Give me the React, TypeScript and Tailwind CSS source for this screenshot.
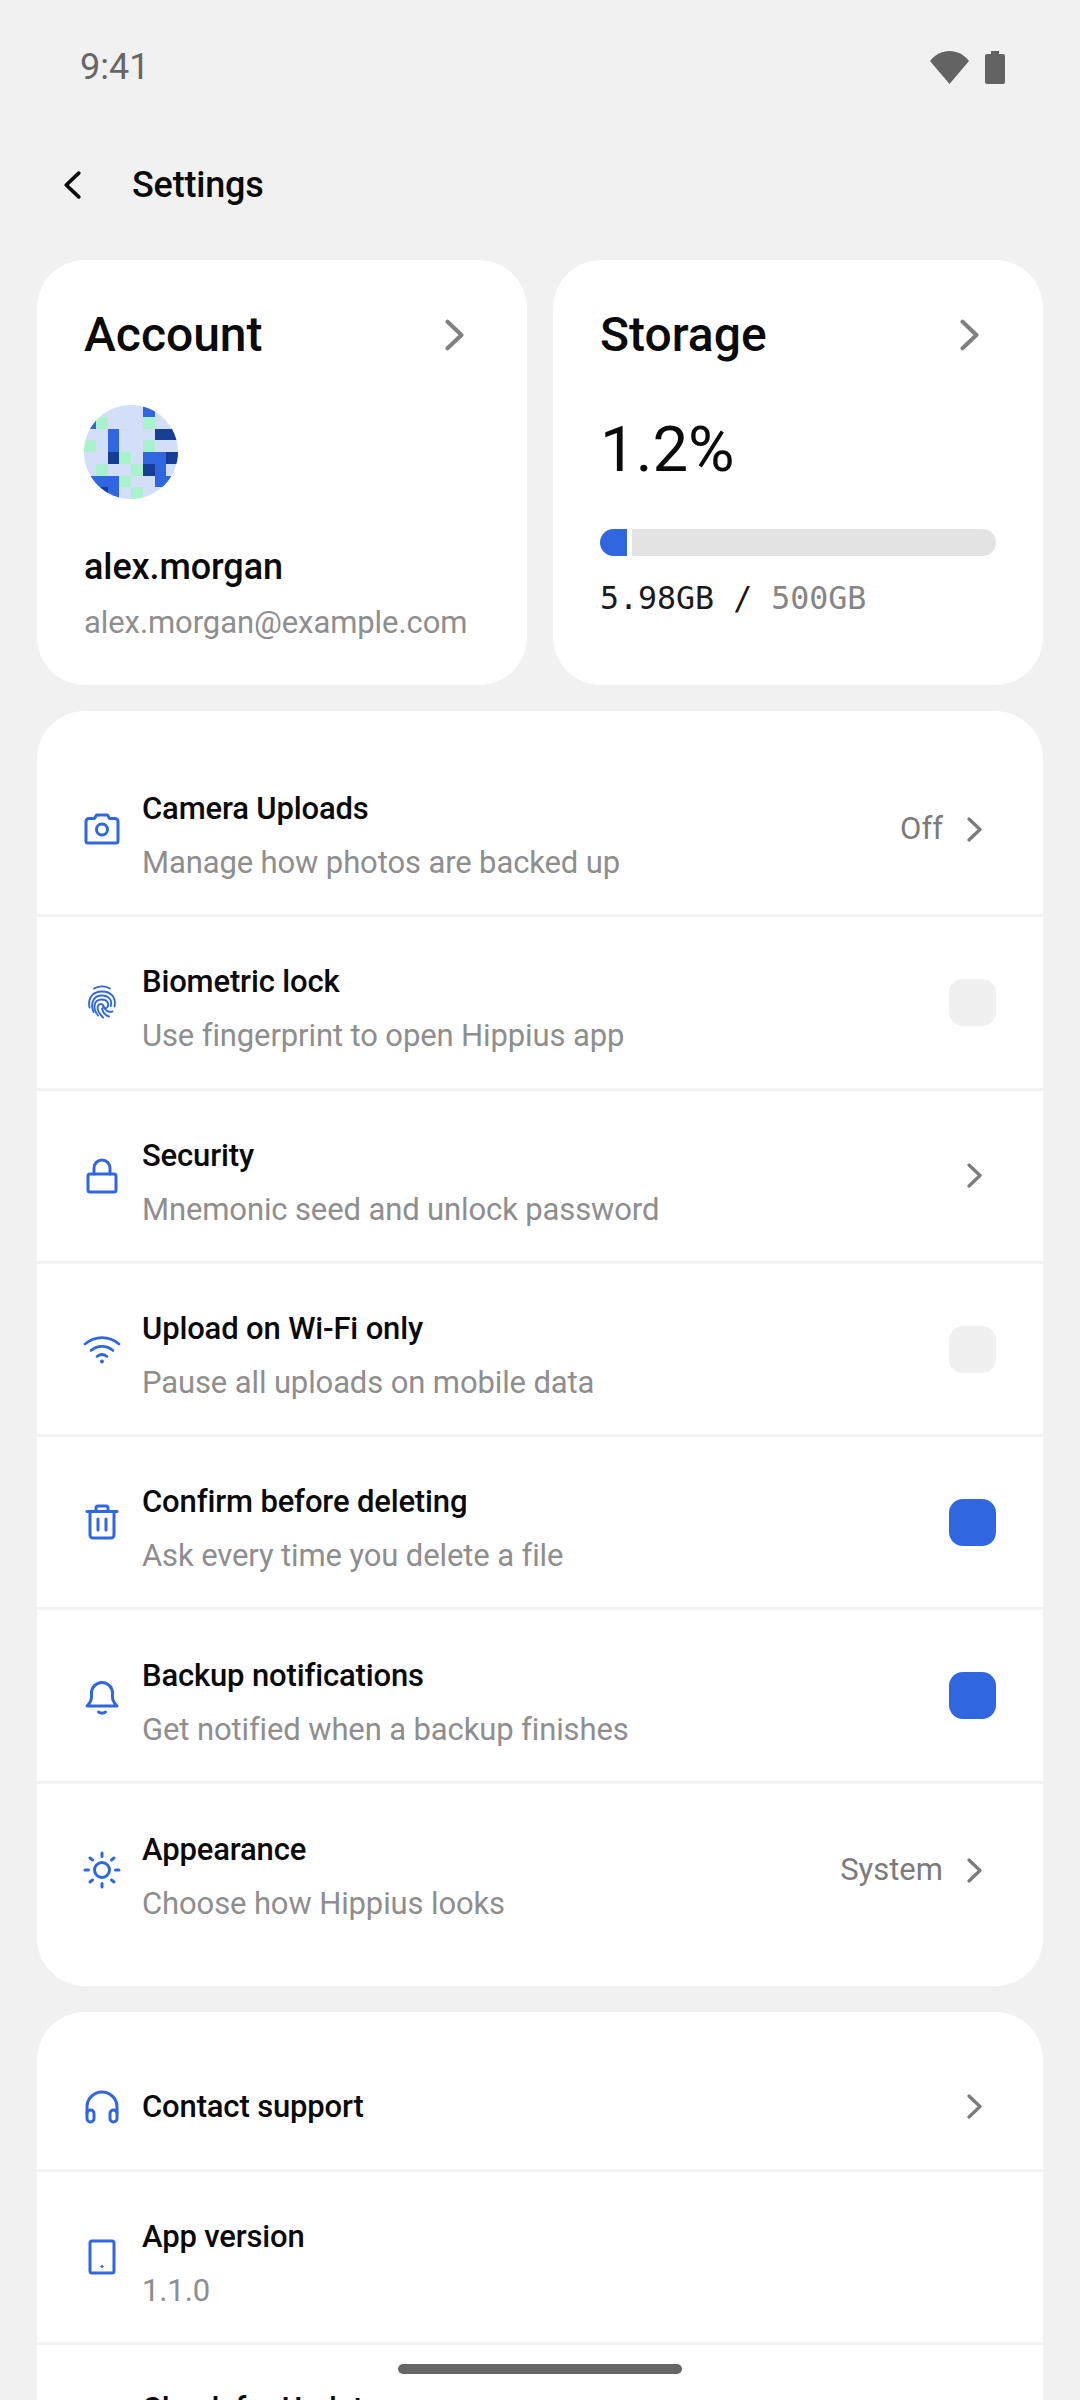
import type { ReactNode } from "react";

const BLUE = "#3067e0";

function Chevron({ className = "w-[15px] h-[25px] text-[#7b7b7b]" }: { className?: string }) {
  return (
    <svg viewBox="0 0 15 25" className={className} fill="none" stroke="currentColor" strokeWidth="3.2" strokeLinecap="round" strokeLinejoin="round">
      <path d="M2 2l11 10.5L2 23" />
    </svg>
  );
}

function Icon({ children }: { children: ReactNode }) {
  return (
    <svg viewBox="0 0 40 40" className="w-[40px] h-[40px] shrink-0" fill="none" stroke={BLUE} strokeWidth="3" strokeLinecap="round" strokeLinejoin="round">
      {children}
    </svg>
  );
}

const CameraIcon = () => (
  <Icon>
    <path d="M4 12.5a3 3 0 0 1 3-3h5.5l2-3.5h11l2 3.5H33a3 3 0 0 1 3 3V32a2 2 0 0 1-2 2H6a2 2 0 0 1-2-2z" />
    <circle cx="20" cy="20.5" r="5.5" />
  </Icon>
);

const FingerprintIcon = () => (
  <Icon>
    <g strokeWidth="1.9">
      <path d="M12 6.500c5-2.700 11-2.700 16 0" />
      <path d="M7.500 25.500C5.500 15.500 11 9.500 20 9.500s14.500 6 12.500 15" />
      <path d="M11.500 30C8 21 11.500 13.500 20 13.500c6.500 0 10.500 4.500 8.800 10.500" />
      <path d="M16 33.500c-5-6-5.500-16 4-16 5 0 7.500 4 5.500 7.500-1.300 2-4 1.500-4.500-.5" />
      <path d="M21 35.500c-3.500-3.500-6.500-8-5-11.500 1.300-2.800 4.800-2.500 5.500 0 1.200 4 4.500 6.500 9 5.500" />
      <path d="M27 34.500c-3-.8-6-3.500-7-8" />
    </g>
  </Icon>
);

const LockIcon = () => (
  <Icon>
    <rect x="6" y="18" width="28" height="18" rx="2" />
    <path d="M12 18v-6a8 8 0 0 1 16 0v6" />
  </Icon>
);

const WifiIcon = () => (
  <Icon>
    <g strokeWidth="2.700">
      <path d="M3 15c10-8.500 24-8.500 34 0" />
      <path d="M9 21.500c6.500-5.500 15.500-5.500 22 0" />
      <path d="M15 27.500c3-2.400 7-2.400 10 0" />
    </g>
    <circle cx="20" cy="32.500" r="1.200" fill={BLUE} strokeWidth="1.500" />
  </Icon>
);

const TrashIcon = () => (
  <Icon>
    <path d="M5 9.500h30" />
    <path d="M14 9.500V6a2 2 0 0 1 2-2h8a2 2 0 0 1 2 2v3.500" />
    <path d="M8 9.500V33a3 3 0 0 0 3 3h18a3 3 0 0 0 3-3V9.500" />
    <path d="M16 17v11M24 17v11" />
  </Icon>
);

const BellIcon = () => (
  <Icon>
    <path d="M5 30h30c-3-3-4.500-5-4.500-9v-4a10.500 10.500 0 0 0-21 0v4c0 4-1.500 6-4.500 9z" />
    <path d="M16.500 36c2 1.300 5 1.300 7 0" />
  </Icon>
);

const SunIcon = () => (
  <Icon>
    <circle cx="20" cy="20" r="7.500" />
    <path d="M20 3v3.500M20 33.500V37M3 20h3.500M33.500 20H37M8 8l2.500 2M32 8l-2.500 2M8 32l2.500-2M32 32l-2.500-2" />
  </Icon>
);

const HeadsetIcon = () => (
  <Icon>
    <path d="M5 26V20a15 15 0 0 1 30 0v6" />
    <rect x="5" y="23" width="7" height="12" rx="3.500" />
    <rect x="28" y="23" width="7" height="12" rx="3.500" />
  </Icon>
);

const TabletIcon = () => (
  <Icon>
    <rect x="8" y="4" width="24" height="32" rx="2" />
    <circle cx="20" cy="29.500" r="1" fill={BLUE} strokeWidth="1" />
  </Icon>
);

function Toggle({ on }: { on?: boolean }) {
  return <div className={on ? "w-[47px] h-[47px] rounded-[14px] bg-[#3067e0]" : "w-[47px] h-[47px] rounded-[14px] bg-[#f0f0f0]"} />;
}

function Row({ icon, title, sub, value, chevron, toggle, last, tall = true }: {
  icon: ReactNode;
  title: string;
  sub?: string;
  value?: string;
  chevron?: boolean;
  toggle?: "on" | "off";
  last?: boolean;
  tall?: boolean;
}) {
  return (
    <div className={`flex items-center pl-[45px] pr-[47px] ${tall ? "h-[173.3px]" : "h-[128px]"} ${last ? "" : "border-b-[3px] border-[#f3f3f3]"}`}>
      <div className="mr-[20px] flex">{icon}</div>
      <div className={`flex-1 flex flex-col gap-[14px] ${sub ? "pt-[14px]" : ""}`}>
        <div className="text-[31px] leading-[40px] font-[465] tracking-[-0.15px] text-[#0a0a0a]">{title}</div>
        {sub && <div className="text-[31px] leading-[40px] text-[#8e8e8e] tracking-[-0.12px]">{sub}</div>}
      </div>
      {value && <div className="text-[31px] text-[#7b7b7b] mr-[24px]">{value}</div>}
      {chevron && <div className="flex mr-[14px]"><Chevron /></div>}
      {toggle && <Toggle on={toggle === "on"} />}
    </div>
  );
}

// 8x8 identicon: l = light, g = green, b = blue, d = dark
const AVATAR = [
  "lllllbll",
  "bglllgll",
  "llbllldd",
  "glbllgll",
  "lldglbbd",
  "lgllgdbl",
  "bbbgllbb",
  "bdblglll",
];

const AVATAR_COLORS: Record<string, string> = {
  l: "#d3dff9",
  g: "#a8f3cb",
  b: "#3067e0",
  d: "#173e95",
};

function Avatar() {
  return (
    <svg viewBox="0 0 8 8" className="w-[94px] h-[94px] rounded-full block" shapeRendering="crispEdges">
      {AVATAR.map((row, y) =>
        row.split("").map((c, x) => <rect key={`${x}-${y}`} x={x} y={y} width="1" height="1" fill={AVATAR_COLORS[c]} />)
      )}
    </svg>
  );
}

export default function App() {
  return (
    <div className="relative w-[1080px] h-[2400px] overflow-hidden bg-[#f1f1f1] font-['Roboto',sans-serif]">
      {/* status bar */}
      <div className="h-[134px] flex items-center justify-between pl-[80px] pr-[75px]">
        <span className="text-[36px] text-[#666666]">9:41</span>
        <div className="flex items-center gap-[16px]">
          <svg viewBox="0 0 39 33" className="w-[39px] h-[33px]" fill="#636363">
            <path d="M19.500 33L0 10C5 3.500 12 0 19.500 0S34 3.500 39 10z" />
          </svg>
          <svg viewBox="0 0 20 33" className="w-[20px] h-[33px]" fill="#636363">
            <path d="M6 0h8v3h4a2 2 0 0 1 2 2v26a2 2 0 0 1-2 2H2a2 2 0 0 1-2-2V5a2 2 0 0 1 2-2h4z" />
          </svg>
        </div>
      </div>

      {/* header */}
      <div className="h-[102px] flex items-center pl-[64px]">
        <Chevron className="w-[17px] h-[30px] text-[#0a0a0a] rotate-180" />
        <span className="ml-[51px] text-[36px] font-[500] tracking-[-0.2px] text-[#0a0a0a]">Settings</span>
      </div>

      <div className="mt-[24px] px-[37px] flex flex-col gap-[26px]">
        <div className="grid grid-cols-2 gap-[26px]">
          <div className="h-[425px] bg-white rounded-[48px] pl-[47px] pr-[63px] pt-[50px]">
            <div className="flex items-center justify-between h-[50px]">
              <span className="text-[48px] font-medium text-[#0a0a0a]">Account</span>
              <Chevron className="w-[19px] h-[32px] text-[#808080]" />
            </div>
            <div className="mt-[45px]"><Avatar /></div>
            <div className="mt-[46px] text-[36px] leading-[44px] tracking-[-0.1px] text-[#0a0a0a] font-[465]">alex.morgan</div>
            <div className="mt-[12px] text-[31px] leading-[44px] tracking-[-0.08px] text-[#8e8e8e]">alex.morgan@example.com</div>
          </div>

          <div className="h-[425px] bg-white rounded-[48px] pl-[47px] pr-[47px] pt-[50px]">
            <div className="flex items-center justify-between h-[50px] pr-[17px]">
              <span className="text-[48px] font-medium text-[#0a0a0a]">Storage</span>
              <Chevron className="w-[19px] h-[32px] text-[#808080]" />
            </div>
            <div className="mt-[55px] text-[63.500px] leading-[70px] font-[450] text-[#0a0a0a]">1.2%</div>
            <div className="mt-[44px] flex gap-[5px] h-[27px]">
              <div className="w-[27px] bg-[#3067e0] rounded-l-full rounded-r-[4px]" />
              <div className="flex-1 bg-[#e3e3e3] rounded-r-full rounded-l-[4px]" />
            </div>
            <div className="mt-[20px] text-[31.600px] leading-[44px] font-['DejaVu_Sans_Mono',monospace] text-[#1a1a1a]">
              5.98GB / <span className="text-[#858585]">500GB</span>
            </div>
          </div>
        </div>

        <div className="bg-white rounded-[48px] pt-[33px] pb-[29px]">
          <Row icon={<CameraIcon />} title="Camera Uploads" sub="Manage how photos are backed up" value="Off" chevron />
          <Row icon={<FingerprintIcon />} title="Biometric lock" sub="Use fingerprint to open Hippius app" toggle="off" />
          <Row icon={<LockIcon />} title="Security" sub="Mnemonic seed and unlock password" chevron />
          <Row icon={<WifiIcon />} title="Upload on Wi-Fi only" sub="Pause all uploads on mobile data" toggle="off" />
          <Row icon={<TrashIcon />} title="Confirm before deleting" sub="Ask every time you delete a file" toggle="on" />
          <Row icon={<BellIcon />} title="Backup notifications" sub="Get notified when a backup finishes" toggle="on" />
          <Row icon={<SunIcon />} title="Appearance" sub="Choose how Hippius looks" value="System" chevron last />
        </div>

        <div className="bg-white rounded-t-[48px] pt-[32px]">
          <Row icon={<HeadsetIcon />} title="Contact support" chevron tall={false} />
          <Row icon={<TabletIcon />} title="App version" sub="1.1.0" />
          <Row icon={<svg className="w-[40px] h-[40px]" />} title="Check for Updates" tall={false} last />
        </div>
      </div>

      {/* home indicator */}
      <div className="absolute left-[398px] top-[2364px] w-[284px] h-[10px] rounded-full bg-[#666666]" />
    </div>
  );
}
